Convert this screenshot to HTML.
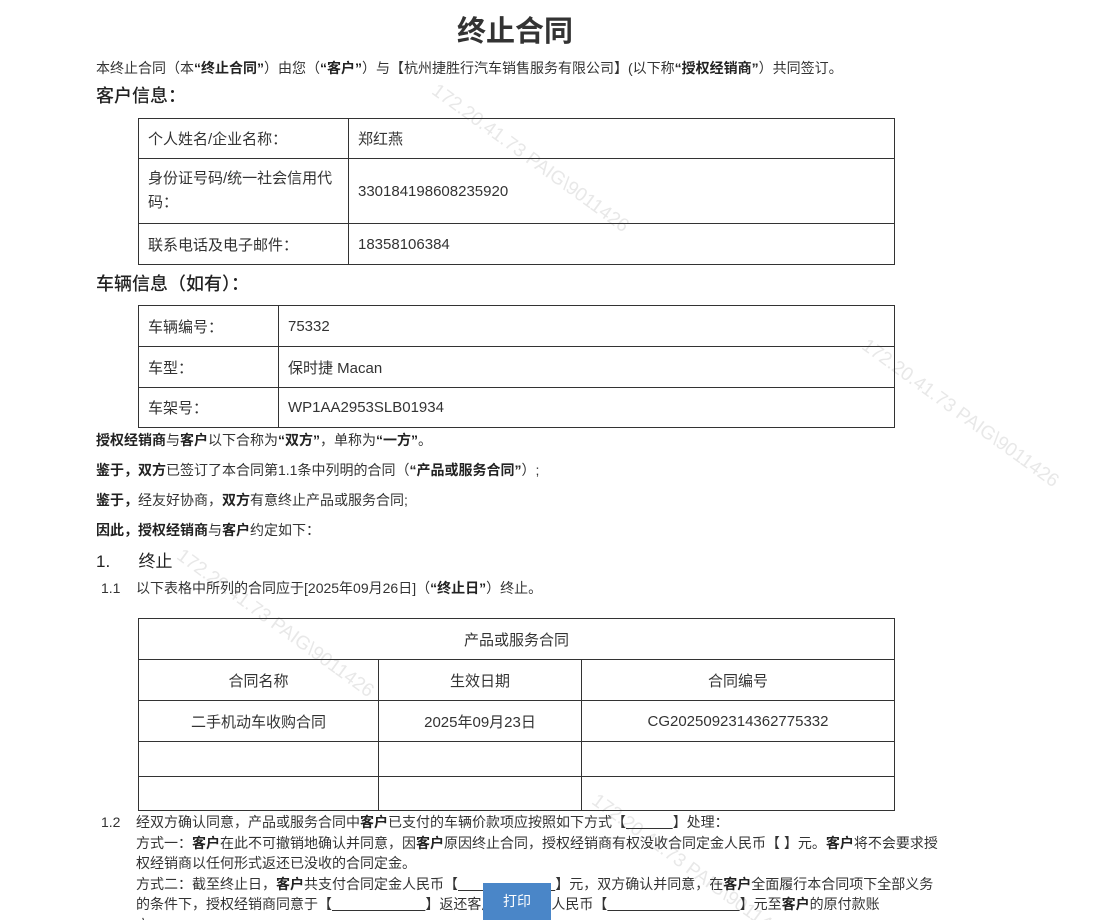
<!DOCTYPE html>
<html><head><meta charset="utf-8"><style>
html,body{margin:0;width:1112px;height:920px;overflow:hidden}
body{background:#fff;font-family:"Liberation Sans","Noto Sans CJK SC",sans-serif;color:#333;position:relative}
.a{position:absolute;white-space:nowrap}
.p{font-size:14px;left:96px}
b{font-weight:bold;color:#222}
table{position:absolute;border-collapse:collapse;font-size:15px;color:#333}
td{border:1px solid #333;padding:0 9px;box-sizing:border-box}
.c td{text-align:center}
.wm{position:absolute;font-size:19px;color:#e8e8e8;transform:rotate(36deg);transform-origin:0 0;white-space:nowrap}
.h{left:96px;font-size:18px;color:#222;font-family:"Noto Sans CJK SC","Liberation Sans",sans-serif;font-weight:500}
</style></head><body>
<div class="wm" style="left:440px;top:80px">172.20.41.73 PAIG\9011426</div>
<div class="wm" style="left:870px;top:335px">172.20.41.73 PAIG\9011426</div>
<div class="wm" style="left:185px;top:545px">172.20.41.73 PAIG\9011426</div>
<div class="wm" style="left:600px;top:790px">172.20.41.73 PAIG\9011426</div>
<div class="a" style="left:457px;top:8px;font-size:29px;font-weight:bold;color:#333">终止合同</div>
<div class="a p" style="top:58px">本终止合同（本<b>“终止合同”</b>）由您（<b>“客户”</b>）与【杭州捷胜行汽车销售服务有限公司】(以下称<b>“授权经销商”</b>）共同签订。</div>
<div class="a h" style="top:82px">客户信息：</div>
<table style="left:138px;top:118px;width:757px">
<tr style="height:40px"><td style="width:210px">个人姓名/企业名称：</td><td>郑红燕</td></tr>
<tr style="height:65px"><td style="line-height:24px">身份证号码/统一社会信用代码：</td><td>330184198608235920</td></tr>
<tr style="height:41px"><td>联系电话及电子邮件：</td><td>18358106384</td></tr>
</table>
<div class="a h" style="top:270px">车辆信息（如有）：</div>
<table style="left:138px;top:305px;width:757px">
<tr style="height:41px"><td style="width:140px">车辆编号：</td><td>75332</td></tr>
<tr style="height:41px"><td>车型：</td><td>保时捷 Macan</td></tr>
<tr style="height:40px"><td>车架号：</td><td>WP1AA2953SLB01934</td></tr>
</table>
<div class="a p" style="top:430px"><b>授权经销商</b>与<b>客户</b>以下合称为<b>“双方”</b>，单称为<b>“一方”</b>。</div>
<div class="a p" style="top:460px"><b>鉴于，双方</b>已签订了本合同第1.1条中列明的合同（<b>“产品或服务合同”</b>）;</div>
<div class="a p" style="top:490px"><b>鉴于，</b>经友好协商，<b>双方</b>有意终止产品或服务合同;</div>
<div class="a p" style="top:520px"><b>因此，授权经销商</b>与<b>客户</b>约定如下：</div>
<div class="a" style="left:96px;top:547px;font-size:17px;color:#222">1.&nbsp;&nbsp;&nbsp;&nbsp;&nbsp;&nbsp;终止</div>
<div class="a" style="left:101px;top:578px;font-size:14px">1.1&nbsp;&nbsp;&nbsp;&nbsp;以下表格中所列的合同应于[2025年09月26日]（<b>“终止日”</b>）终止。</div>
<table class="c" style="left:138px;top:618px;width:757px">
<tr style="height:41px"><td colspan="3">产品或服务合同</td></tr>
<tr style="height:41px"><td style="width:240px">合同名称</td><td style="width:203px">生效日期</td><td>合同编号</td></tr>
<tr style="height:41px"><td>二手机动车收购合同</td><td>2025年09月23日</td><td>CG2025092314362775332</td></tr>
<tr style="height:35px"><td></td><td></td><td></td></tr>
<tr style="height:34px"><td></td><td></td><td></td></tr>
</table>
<div class="a" style="left:101px;top:812px;font-size:14px;line-height:20.5px">1.2</div>
<div class="a" style="left:136px;top:812px;font-size:14px;line-height:20.5px">经双方确认同意，产品或服务合同中<b>客户</b>已支付的车辆价款项应按照如下方式【<u>&nbsp;&nbsp;&nbsp;&nbsp;&nbsp;&nbsp;&nbsp;&nbsp;&nbsp;&nbsp;&nbsp;&nbsp;</u>】处理：<br>方式一：<b>客户</b>在此不可撤销地确认并同意，因<b>客户</b>原因终止合同，授权经销商有权没收合同定金人民币【 】元。<b>客户</b>将不会要求授<br>权经销商以任何形式返还已没收的合同定金。<br>方式二：截至终止日，<b>客户</b>共支付合同定金人民币【<u>&nbsp;&nbsp;&nbsp;&nbsp;&nbsp;&nbsp;&nbsp;&nbsp;&nbsp;&nbsp;&nbsp;&nbsp;&nbsp;&nbsp;&nbsp;&nbsp;&nbsp;&nbsp;&nbsp;&nbsp;&nbsp;&nbsp;&nbsp;&nbsp;&nbsp;</u>】元，双方确认并同意，在<b>客户</b>全面履行本合同项下全部义务<br>的条件下，授权经销商同意于【<u>&nbsp;&nbsp;&nbsp;&nbsp;&nbsp;&nbsp;&nbsp;&nbsp;&nbsp;&nbsp;&nbsp;&nbsp;&nbsp;&nbsp;&nbsp;&nbsp;&nbsp;&nbsp;&nbsp;&nbsp;&nbsp;&nbsp;&nbsp;&nbsp;</u>】返还客户合同定金人民币【<u>&nbsp;&nbsp;&nbsp;&nbsp;&nbsp;&nbsp;&nbsp;&nbsp;&nbsp;&nbsp;&nbsp;&nbsp;&nbsp;&nbsp;&nbsp;&nbsp;&nbsp;&nbsp;&nbsp;&nbsp;&nbsp;&nbsp;&nbsp;&nbsp;&nbsp;&nbsp;&nbsp;&nbsp;&nbsp;&nbsp;&nbsp;&nbsp;&nbsp;&nbsp;</u>】元至<b>客户</b>的原付款账<br>户。</div>
<div class="a" style="left:483px;top:883px;width:68px;height:37px;background:#4a86c8;color:#fff;font-size:14px;text-align:center;line-height:36px">打印</div>
</body></html>
